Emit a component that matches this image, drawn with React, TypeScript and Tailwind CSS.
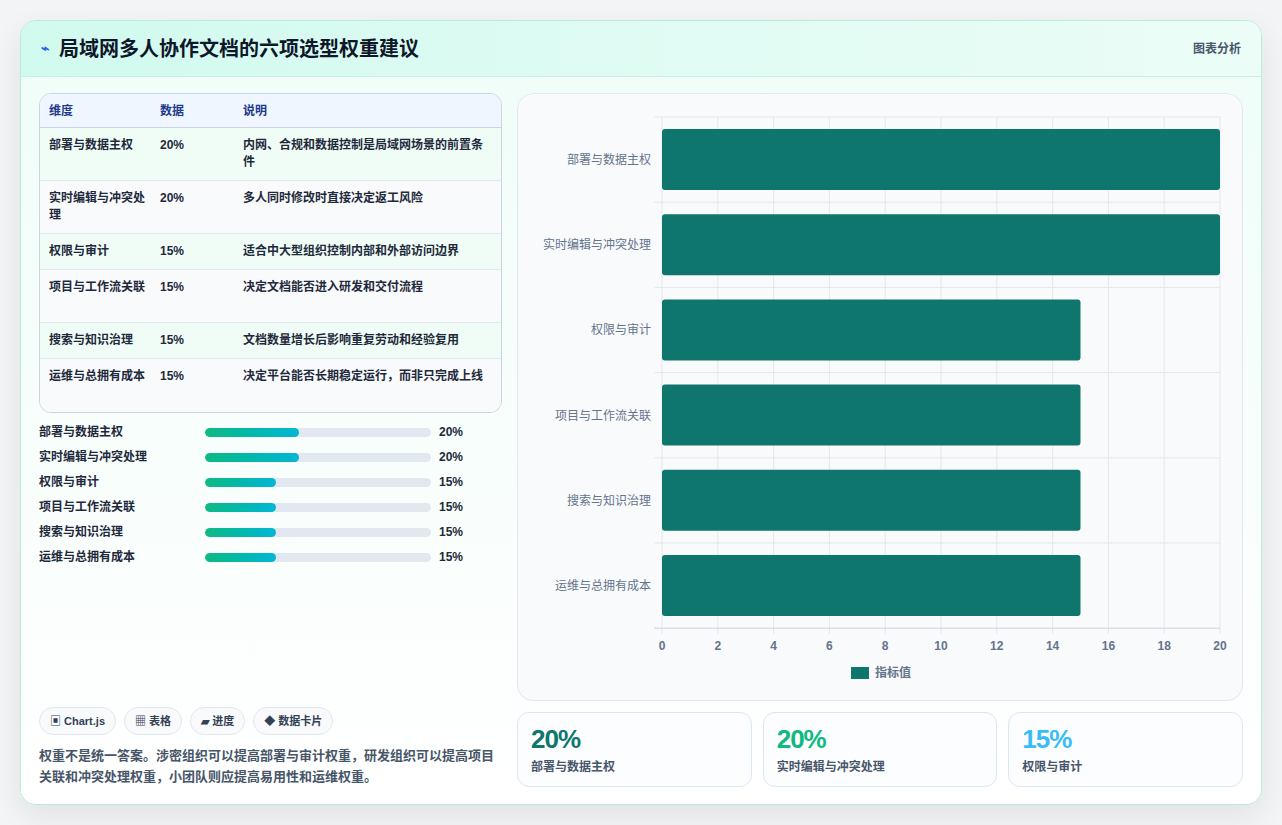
const rows = [
  { name: '部署与数据主权', v: 20, note: '内网、合规和数据控制是局域网场景的前置条件' },
  { name: '实时编辑与冲突处理', v: 20, note: '多人同时修改时直接决定返工风险' },
  { name: '权限与审计', v: 15, note: '适合中大型组织控制内部和外部访问边界' },
  { name: '项目与工作流关联', v: 15, note: '决定文档能否进入研发和交付流程' },
  { name: '搜索与知识治理', v: 15, note: '文档数量增长后影响重复劳动和经验复用' },
  { name: '运维与总拥有成本', v: 15, note: '决定平台能否长期稳定运行，而非只完成上线' },
];

const font = { fontFamily: '"Liberation Sans", "Noto Sans CJK SC", sans-serif' };

function Chart() {
  const x0 = 144, x1 = 702, top = 23, rowH = 85.2;
  const sx = (v: number) => x0 + ((x1 - x0) * v) / 20;
  return (
    <svg width="724" height="606" viewBox="0 0 724 606" className="block">
      {Array.from({ length: 11 }).map((_, i) => (
        <line key={i} x1={sx(i * 2)} x2={sx(i * 2)} y1={top} y2={top + rowH * 6 + 6} stroke="#e5e7eb" />
      ))}
      {Array.from({ length: 7 }).map((_, i) => (
        <line key={i} x1={x0 - 8} x2={x1} y1={top + rowH * i} y2={top + rowH * i} stroke={i === 6 ? '#cbd5e1' : '#e5e7eb'} />
      ))}
      {rows.map((r, i) => (
        <g key={r.name}>
          <rect x={x0} y={top + rowH * i + 12} width={sx(r.v) - x0} height={61} rx={3} fill="#0f766e" />
          <text x={x0 - 11} y={top + rowH * i + 47} textAnchor="end" fontSize="12" fill="#64748b">{r.name}</text>
        </g>
      ))}
      {Array.from({ length: 11 }).map((_, i) => (
        <text key={i} x={sx(i * 2)} y={556} textAnchor="middle" fontSize="12" fontWeight="bold" fill="#64748b">{i * 2}</text>
      ))}
      <rect x={333} y={573} width={18} height={12} fill="#0f766e" />
      <text x={357} y={583} fontSize="12" fontWeight="bold" fill="#64748b">指标值</text>
    </svg>
  );
}

export default function App() {
  return (
    <div className="w-[1282px] h-[825px] bg-[#f3f4f6] pt-5 px-5" style={font}>
      <div className="w-[1242px] h-[785px] rounded-2xl border border-[#b7ebe0] bg-white overflow-hidden shadow-[0_10px_30px_rgba(0,0,0,0.08)] flex flex-col">
        <div className="h-[56px] shrink-0 flex items-center justify-between px-5 bg-gradient-to-r from-[#d1faef] to-[#ecfdf7] border-b border-[#c7f0e4]">
          <div className="flex items-center gap-2.5">
            <span className="text-[#2563eb] text-[14px] font-bold">⌁</span>
            <span className="text-[20px] font-bold text-[#0f172a]">局域网多人协作文档的六项选型权重建议</span>
          </div>
          <span className="text-[12px] font-bold text-[#475569]">图表分析</span>
        </div>
        <div className="flex-1 flex gap-[15px] px-[18px] pt-4 pb-[18px] bg-gradient-to-b from-[#f0fdf8] to-white">
          <div className="w-[464px] flex flex-col">
            <div className="rounded-xl border border-[#cbd5e1] overflow-hidden text-[12px] font-bold text-[#1e293b]">
              <div className="flex h-[34px] items-center bg-[#eff6ff] text-[#1e3a8a] border-b border-[#cbd5e1]">
                <div className="w-[120px] pl-[9px]">维度</div>
                <div className="w-[83px]">数据</div>
                <div className="flex-1">说明</div>
              </div>
              {rows.map((r, i) => (
                <div key={r.name} className={`flex pt-[9px] pb-[9px] leading-[17px] ${i < 5 ? 'border-b border-[#e2e8f0]' : ''} ${i % 2 === 0 ? 'bg-[#f0fdf6]' : 'bg-[#f8fafc]'} ${r.note.length > 20 ? '' : ''}`} style={{ minHeight: r.name.length > 7 || r.note.length > 20 ? 53 : 35 }}>
                  <div className="w-[120px] pl-[9px] pr-3">{r.name}</div>
                  <div className="w-[83px]">{r.v}%</div>
                  <div className="flex-1 pr-4">{r.note}</div>
                </div>
              ))}
            </div>
            <div className="mt-[10px] flex flex-col gap-[7px] text-[12px] font-bold text-[#1e293b]">
              {rows.map((r) => (
                <div key={r.name} className="flex items-center h-[18px]">
                  <div className="w-[166px]">{r.name}</div>
                  <div className="w-[226px] h-[9px] rounded-full bg-[#e2e8f0] overflow-hidden">
                    <div className="h-full rounded-full bg-gradient-to-r from-[#10b981] to-[#06b6d4]" style={{ width: `${r.v === 20 ? 41.5 : 31.4}%` }} />
                  </div>
                  <div className="ml-2">{r.v}%</div>
                </div>
              ))}
            </div>
            <div className="flex-1" />
            <div className="flex gap-2 text-[11px] font-bold text-[#334155]">
              {['▣ Chart.js', '▦ 表格', '▰ 进度', '◆ 数据卡片'].map((t) => (
                <span key={t} className="h-[28px] px-[10px] flex items-center rounded-full border border-[#e2e8f0] bg-[#f8fafc]">{t}</span>
              ))}
            </div>
            <p className="mt-[10px] text-[13px] leading-[21px] font-bold text-[#475569]">
              权重不是统一答案。涉密组织可以提高部署与审计权重，研发组织可以提高项目关联和冲突处理权重，小团队则应提高易用性和运维权重。
            </p>
          </div>
          <div className="flex-1 flex flex-col gap-[11px]">
            <div className="h-[608px] rounded-2xl border border-[#e2e8f0] bg-[#f8fafc] overflow-hidden">
              <Chart />
            </div>
            <div className="flex gap-[11px]">
              {[
                { v: '20%', l: '部署与数据主权', c: 'text-[#0f766e]' },
                { v: '20%', l: '实时编辑与冲突处理', c: 'text-[#10b981]' },
                { v: '15%', l: '权限与审计', c: 'text-[#38bdf8]' },
              ].map((s) => (
                <div key={s.l} className="flex-1 h-[75px] rounded-xl border border-[#dbe7f3] bg-[#fbfdff] px-[13px] pt-[10px]">
                  <div className={`text-[26px] leading-[32px] font-bold tracking-[-1px] ${s.c}`}>{s.v}</div>
                  <div className="text-[12px] font-bold text-[#475569] mt-[3px]">{s.l}</div>
                </div>
              ))}
            </div>
          </div>
        </div>
      </div>
    </div>
  );
}
